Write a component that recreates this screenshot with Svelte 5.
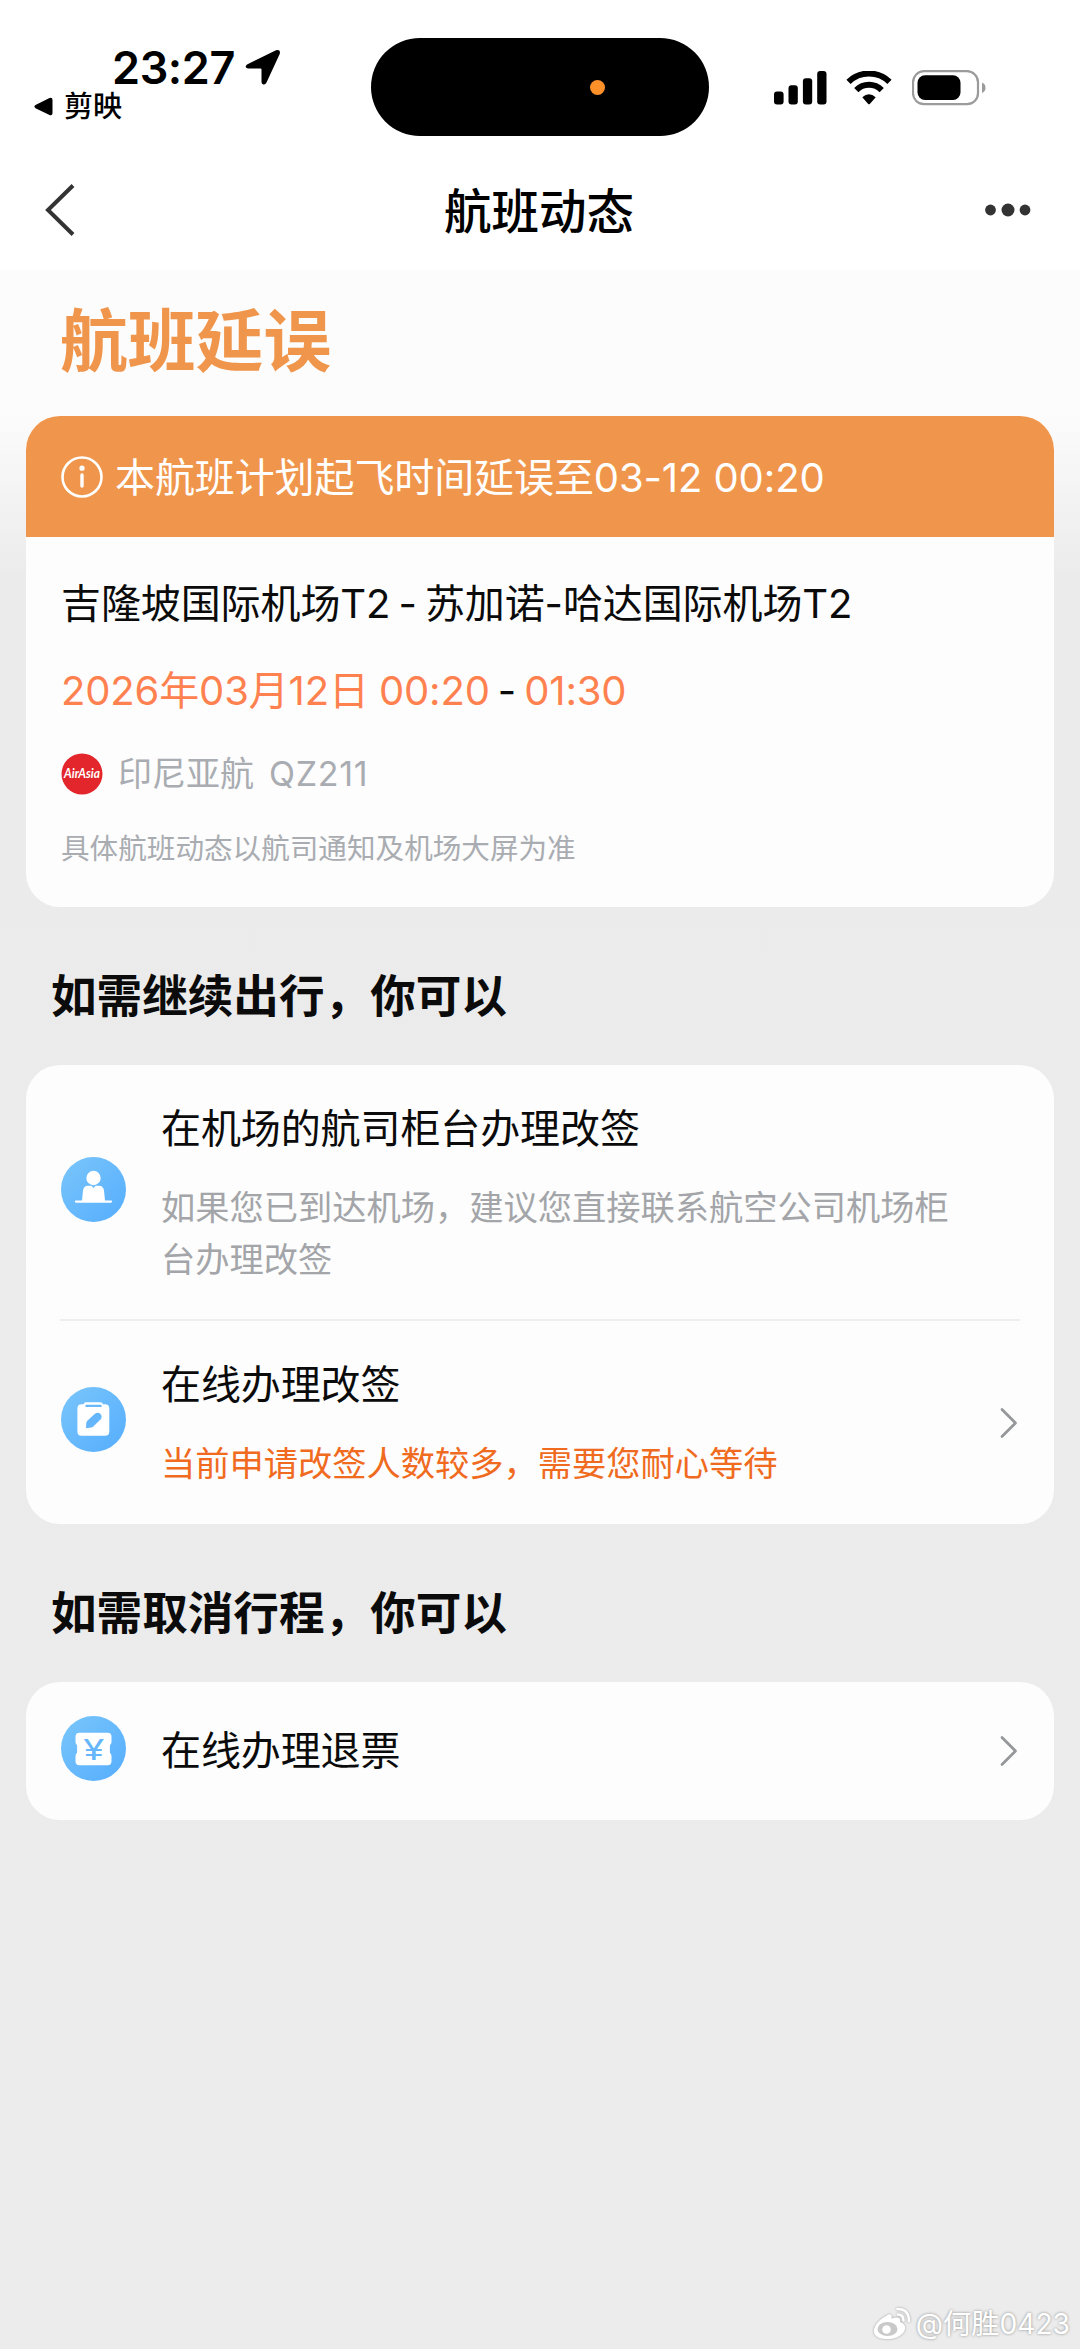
<script lang="ts">
  interface Option {
    icon: 'counter' | 'change' | 'refund';
    title: string;
    desc?: string;
    warn?: boolean;
    link?: boolean;
  }

  interface Section {
    title: string;
    options: Option[];
  }

  const flight = {
    notice: '本航班计划起飞时间延误至03-12 00:20',
    route: '吉隆坡国际机场T2 - 苏加诺-哈达国际机场T2',
    depart: '2026年03月12日 00:20',
    arrive: '01:30',
    airline: '印尼亚航',
    number: 'QZ211',
  };

  const sections: Section[] = [
    {
      title: '如需继续出行，你可以',
      options: [
        {
          icon: 'counter',
          title: '在机场的航司柜台办理改签',
          desc: '如果您已到达机场，建议您直接联系航空公司机场柜台办理改签',
        },
        {
          icon: 'change',
          title: '在线办理改签',
          desc: '当前申请改签人数较多，需要您耐心等待',
          warn: true,
          link: true,
        },
      ],
    },
    {
      title: '如需取消行程，你可以',
      options: [{ icon: 'refund', title: '在线办理退票', link: true }],
    },
  ];
</script>

{#snippet optionIcon(name: Option['icon'])}
  <svg class="option-icon" viewBox="0 0 65 65">
    <defs>
      <linearGradient id="blue-{name}" x1="0" y1="0" x2="1" y2="1">
        <stop offset="0" stop-color="#7ac6fb" />
        <stop offset="1" stop-color="#55adfd" />
      </linearGradient>
    </defs>
    <circle cx="32.5" cy="32.5" r="32.5" fill="url(#blue-{name})" />
    {#if name === 'counter'}
      <circle cx="32.5" cy="21" r="7.2" fill="#fff" />
      <path
        d="M21 43.500 22 33.500Q22.600 28.700 27 28.700H30.500L32.500 31 34.500 28.700H38Q42.400 28.700 43 33.500L44 43.500H50Q51.200 43.500 51.200 44.600T50 45.700H15Q13.800 45.700 13.800 44.600T15 43.500Z"
        fill="#fff"
      />
    {:else if name === 'change'}
      <path
        d="M25 15.200H39.500Q41.500 15.200 42 17.200H44Q48.300 17.200 48.300 21.500V44.500Q48.300 48.800 44 48.800H20.700Q16.400 48.800 16.400 44.500V21.500Q16.400 17.200 20.700 17.200H22.500Q23 15.200 25 15.200Z"
        fill="#fff"
      />
      <path d="M25.500 18.900H39.500" stroke="#68b8fc" stroke-width="2.400" stroke-linecap="round" />
      <path
        d="M25 41.200 25.300 35.800Q25.500 34.600 26.300 33.800L34 26.700Q37 24.800 39.300 26.800 41.600 29.200 40 32L32.300 39.400Q31.300 40.400 30 40.600Z"
        fill="#66b6fc"
      />
    {:else}
      <path
        d="M18.500 16.800H46.500Q50.500 16.800 50.500 20.800V26Q50.500 28 48.900 29.200V36.800Q50.500 38 50.500 40V45.200Q50.500 49.200 46.500 49.200H18.500Q14.500 49.200 14.500 45.200V40Q14.500 38 16.100 36.800V29.200Q14.500 28 14.500 26V20.800Q14.500 16.800 18.500 16.800Z"
        fill="#fff"
      />
      <text class="yen" x="32.700" y="43.500" text-anchor="middle" textLength="21" lengthAdjust="spacingAndGlyphs">¥</text>
    {/if}
  </svg>
{/snippet}

<div class="screen">
  <header class="status-bar">
    <div class="status-left">
      <div class="clock-row">
        <span class="clock">23:27</span>
        <svg class="location" viewBox="0 0 36 36">
          <path
            d="M2 15.500 31 1.200Q36 0 34.700 5L21.500 33.500Q20 36.500 17.500 35 16.500 34.500 16.500 32.800V20.500Q16.500 19.500 15.500 19.500H3Q-1.200 18.500 2 15.500Z"
          />
        </svg>
      </div>
      <div class="return-row">
        <svg class="triangle" viewBox="0 0 19 19">
          <path d="M1.500 8 15.500 1Q18.500 0 18.500 3V16Q18.500 19 15.500 18L1.500 11.200Q-.7 9.600 1.500 8Z" />
        </svg>
        <span class="return-app">剪映</span>
      </div>
    </div>

    <div class="island"><span class="mic-dot"></span></div>

    <div class="status-right">
      <svg class="signal" viewBox="0 0 53 34">
        <rect x="0" y="20.500" width="9.600" height="13" rx="3" />
        <rect x="14.500" y="14.300" width="9.300" height="19.200" rx="3" />
        <rect x="28.900" y="7.300" width="9.300" height="26.200" rx="3" />
        <rect x="43.200" y="0" width="9.300" height="33.500" rx="3" />
      </svg>
      <svg class="wifi" viewBox="0 0 46 34">
        <path d="M2.500 10.800A29.500 29.500 0 0 1 43.500 10.800" />
        <path d="M10.300 19.100A18 18 0 0 1 35.700 19.100" />
        <path class="wifi-dot" d="M16.300 26.200Q23 20.300 29.700 26.200L24 32.800Q23 33.800 22 32.800Z" />
      </svg>
      <svg class="battery" viewBox="0 0 74 36">
        <rect class="shell" x="1" y="1.200" width="65" height="33" rx="11" />
        <rect x="5.500" y="5.300" width="43" height="24.600" rx="7.500" />
        <path class="nub" d="M70 12.500Q73.500 14 73.500 17.700T70 22.900Z" />
      </svg>
    </div>
  </header>

  <nav class="nav-bar">
    <svg class="back" viewBox="0 0 30 52">
      <path d="M28 1.500 3 26 28 50.500" />
    </svg>
    <h1 class="nav-title">航班动态</h1>
    <svg class="more" viewBox="0 0 46 14">
      <circle cx="5.500" cy="7" r="5.400" />
      <circle cx="23" cy="7" r="6.500" />
      <circle cx="40" cy="7" r="5.400" />
    </svg>
  </nav>

  <main class="content">
    <h2 class="headline">航班延误</h2>

    <section class="card">
      <div class="notice">
        <svg class="info" viewBox="0 0 42 44">
          <circle class="ring" cx="21" cy="22" r="19.500" />
          <circle cx="21" cy="13.200" r="2.600" />
          <path class="stem" d="M21 20V31" />
        </svg>
        <span class="notice-text">{flight.notice}</span>
      </div>
      <div class="flight">
        <div class="route">{flight.route}</div>
        <div class="times">
          <span class="time">{flight.depart}</span>
          <span>-</span>
          <span class="time">{flight.arrive}</span>
        </div>
        <div class="airline">
          <svg class="airline-logo" viewBox="0 0 42 42">
            <circle cx="21" cy="21" r="20.500" />
            <text x="21" y="25" text-anchor="middle" textLength="36" lengthAdjust="spacingAndGlyphs">AirAsia</text>
          </svg>
          <span>{flight.airline}</span>
          <span class="flight-number">{flight.number}</span>
        </div>
        <div class="footnote">具体航班动态以航司通知及机场大屏为准</div>
      </div>
    </section>

    {#each sections as section (section.title)}
      <h3 class="section-title">{section.title}</h3>
      <section class="card options">
        {#each section.options as option (option.title)}
          <div class="option" class:compact={!option.desc}>
            {@render optionIcon(option.icon)}
            <div class="option-text">
              <div class="option-title">{option.title}</div>
              {#if option.desc}
                <div class="option-desc" class:warn={option.warn}>{option.desc}</div>
              {/if}
            </div>
            {#if option.link}
              <svg class="chevron" viewBox="0 0 20 32">
                <path d="M3 2.500 16.500 16 3 29.500" />
              </svg>
            {/if}
          </div>
        {/each}
      </section>
    {/each}
  </main>

  <footer class="watermark">
    <svg class="weibo" viewBox="0 0 40 34">
      <path
        class="body"
        d="M14 9C18 5.500 20.500 7.500 19.500 11.500 25 9.500 29 10.500 28 15 36 17.500 34 25 27.500 29 19 34 6 33 2.500 27 -.5 21 7 12.500 14 9Z"
      />
      <ellipse class="eye" cx="15.500" cy="22" rx="10" ry="7" />
      <circle class="pupil" cx="14.500" cy="22.500" r="4.300" />
      <path class="wave" d="M26 7.500Q31.500 7.500 31.500 13.500M25.500 2Q37 2 37 14" />
    </svg>
    <span>@何胜0423</span>
  </footer>
</div>

<style>
  :global(body) {
    margin: 0;
    background: #ececec;
  }

  .screen {
    display: flex;
    flex-direction: column;
    width: 1080px;
    height: 2349px;
    overflow: hidden;
    font-family: Inter, 'Noto Sans CJK SC', sans-serif;
    color: #0b0b0b;
    background: linear-gradient(#fcfcfc 410px, #ebebeb 580px, #ececec);
  }

  h1,
  h2,
  h3 {
    margin: 0;
  }

  svg {
    display: block;
    flex-shrink: 0;
  }

  /* --- Status bar --- */

  .status-bar {
    display: grid;
    grid-template-columns: 371px 338px 1fr;
    height: 150px;
    background: #fff;
    color: #000;
  }

  .status-left {
    padding-top: 42px;
  }

  .clock-row {
    display: flex;
    align-items: center;
    gap: 10px;
    height: 50px;
    padding-left: 112px;
  }

  .clock {
    width: 123px;
    font-size: 45px;
    font-weight: 600;
    letter-spacing: -0.4px;
    white-space: nowrap;
  }

  .location {
    width: 36px;
    height: 36px;
  }

  .return-row {
    display: flex;
    align-items: center;
    gap: 11px;
    height: 28px;
    padding-left: 34px;
  }

  .triangle {
    width: 19px;
    height: 19px;
  }

  .return-app {
    padding-top: 2px;
    font-size: 29px;
    font-weight: 500;
    line-height: 28px;
  }

  .island {
    display: flex;
    align-items: center;
    justify-content: flex-end;
    box-sizing: border-box;
    height: 98px;
    margin-top: 38px;
    padding-right: 104px;
    border-radius: 49px;
    background: #000;
  }

  .mic-dot {
    width: 15px;
    height: 15px;
    border-radius: 50%;
    background: #fe9029;
  }

  .status-right {
    display: flex;
    align-items: flex-start;
    padding: 70px 0 0 65px;
  }

  .signal {
    width: 53px;
    height: 34px;
    margin-top: 1px;
  }

  .wifi {
    width: 46px;
    height: 34px;
    margin: 1px 20px 0 19px;
    fill: none;
    stroke: #000;
    stroke-width: 6;
  }

  .wifi-dot {
    fill: #000;
    stroke: none;
  }

  .battery {
    width: 74px;
    height: 36px;
  }

  .shell {
    fill: none;
    stroke: #9b9b9b;
    stroke-width: 2.2;
  }

  .nub {
    fill: #9b9b9b;
  }

  /* --- Navigation --- */

  .nav-bar {
    display: flex;
    align-items: center;
    justify-content: space-between;
    height: 120px;
    padding: 0 49px 0 45px;
    background: #fff;
  }

  .back {
    width: 30px;
    height: 52px;
    margin-right: 18px;
    fill: none;
    stroke: #333;
    stroke-width: 4;
  }

  .nav-title {
    padding-top: 4px;
    font-size: 47.500px;
    font-weight: 500;
    line-height: 60px;
    color: #000;
  }

  .more {
    width: 46px;
    height: 14px;
    fill: #333;
  }

  /* --- Content --- */

  .content {
    padding: 0 26px;
  }

  .headline {
    height: 146px;
    padding-left: 34px;
    font-size: 67.800px;
    font-weight: 700;
    line-height: 142px;
    color: #f0964c;
  }

  .card {
    overflow: hidden;
    border-radius: 34px;
    background: #fdfdfd;
  }

  .notice {
    display: flex;
    align-items: center;
    gap: 12px;
    height: 121px;
    padding-left: 35px;
    font-size: 40px;
    color: #fff;
    background: #f0964c;
  }

  .notice-text {
    padding-bottom: 4px;
    letter-spacing: -0.1px;
  }

  .info {
    width: 42px;
    height: 44px;
    fill: #fff;
  }

  .ring,
  .stem {
    fill: none;
    stroke: #fff;
    stroke-width: 2.6;
  }

  .stem {
    stroke-width: 3.4;
    stroke-linecap: round;
  }

  .flight {
    box-sizing: border-box;
    height: 370px;
    padding: 37px 35px 0;
  }

  .route {
    font-size: 40px;
    line-height: 60px;
    letter-spacing: -0.1px;
    word-spacing: -3px;
    white-space: nowrap;
  }

  .times {
    display: flex;
    gap: 8px;
    margin-top: 27px;
    font-size: 40px;
    line-height: 60px;
  }

  .time {
    color: #ff8150;
    letter-spacing: -0.15px;
    word-spacing: -1px;
  }

  .airline {
    display: flex;
    align-items: center;
    gap: 15px;
    margin-top: 28px;
    font-size: 34px;
    line-height: 50px;
    color: #a9acb1;
  }

  .flight-number {
    letter-spacing: 0.7px;
  }

  .airline-logo {
    width: 42px;
    height: 42px;
    fill: #e3262b;
  }

  .airline-logo text {
    font-family: Lato, sans-serif;
    font-size: 13px;
    font-style: italic;
    font-weight: 700;
    fill: #fff;
  }

  .footnote {
    margin-top: 29px;
    font-size: 28.600px;
    line-height: 42px;
    color: #a9acb1;
  }

  .section-title {
    height: 158px;
    padding: 60px 0 0 25px;
    box-sizing: border-box;
    font-size: 45.600px;
    font-weight: 700;
    line-height: 60px;
  }

  /* --- Options --- */

  .options {
    padding: 0 34px;
  }

  .option {
    display: flex;
    align-items: center;
    box-sizing: border-box;
    padding: 34px 0 33px;
  }

  .option:last-child {
    padding-bottom: 34px;
  }

  .option.compact {
    height: 138px;
    padding: 0;
  }

  .option + .option {
    border-top: 2px solid #eee;
  }

  .option-icon {
    width: 65px;
    height: 65px;
    margin: 0 35px 6px 1px;
  }

  .yen {
    font-size: 29px;
    font-weight: 400;
    fill: #66b6fc;
  }

  .option-text {
    flex: 1;
  }

  .option-title {
    font-size: 40px;
    line-height: 60px;
    letter-spacing: -0.1px;
  }

  .option-desc {
    width: 800px;
    margin-top: 23px;
    font-size: 34.250px;
    line-height: 52px;
    color: #a3a5a9;
  }

  .option-desc.warn {
    color: #f06a20;
  }

  .chevron {
    width: 20px;
    height: 32px;
    margin-right: 1px;
    fill: none;
    stroke: #96979b;
    stroke-width: 2.8;
    stroke-linecap: round;
    stroke-linejoin: round;
  }

  /* --- Watermark --- */

  .watermark {
    display: flex;
    align-items: center;
    justify-content: flex-end;
    gap: 4px;
    margin-top: auto;
    padding: 0 10px 7px 0;
    font-size: 28.200px;
    line-height: 36px;
    color: #fff;
    text-shadow: 0 0 3px #888;
  }

  .weibo {
    width: 40px;
    height: 34px;
    overflow: visible;
    filter: drop-shadow(0 0 1px #999);
  }

  .body,
  .pupil {
    fill: #fff;
  }

  .eye {
    fill: #c9c9c9;
  }

  .wave {
    fill: none;
    stroke: #fff;
    stroke-width: 2.6;
    stroke-linecap: round;
  }
</style>
